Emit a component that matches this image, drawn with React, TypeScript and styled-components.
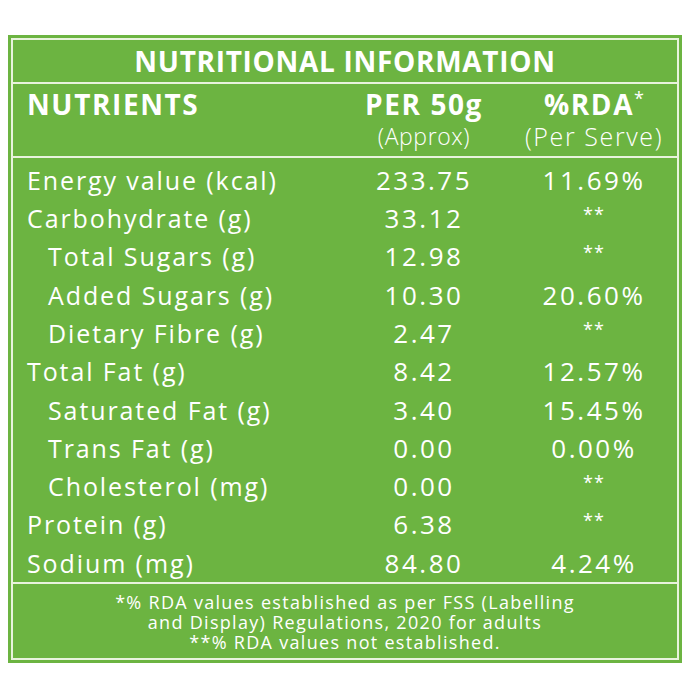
import React from 'react';
import styled, { createGlobalStyle } from 'styled-components';

const GlobalStyle = createGlobalStyle`
  body {
    margin: 0;
    background: #ffffff;
    font-family: "Open Sans", "Noto Sans", sans-serif;
  }
`;

const Page = styled.div`
  width: 690px;
  height: 700px;
  padding: 35px 8px 0 8px;
  box-sizing: border-box;
`;

const OuterBox = styled.div`
  background: #6cb441;
  padding: 3px;
  width: 674px;
  height: 628px;
  box-sizing: border-box;
`;

const InnerBox = styled.div`
  border: 2px solid #e8f3dd;
  height: 100%;
  box-sizing: border-box;
  display: flex;
  flex-direction: column;
  color: #ffffff;
`;

const TitleBand = styled.div`
  height: 43px;
  display: flex;
  align-items: center;
  justify-content: center;
  font-size: 28px;
  font-weight: 700;
  letter-spacing: 0.7px;
  border-bottom: 2px solid #e8f3dd;
`;

const Grid = styled.div`
  display: grid;
  grid-template-columns: 301px 148px 148px;
  column-gap: 22px;
  padding-left: 14px;
`;

const HeaderBand = styled(Grid)`
  height: 74px;
  box-sizing: border-box;
  padding-top: 3px;
  border-bottom: 2px solid #e8f3dd;
`;

const HeadCell = styled.div<{ $center?: boolean }>`
  display: flex;
  flex-direction: column;
  align-items: ${(p) => (p.$center ? 'center' : 'flex-start')};
`;

const HeadMain = styled.span`
  font-size: 28px;
  font-weight: 700;
  line-height: 34px;
  letter-spacing: 1.6px;
  white-space: nowrap;
`;

const HeadSub = styled.span<{ $size: number; $track: number }>`
  font-size: ${(p) => p.$size}px;
  letter-spacing: ${(p) => p.$track}px;
  font-weight: 300;
  line-height: 30px;
  white-space: nowrap;
`;

const Star = styled.span`
  display: inline-block;
  vertical-align: top;
  font-size: 18px;
  line-height: 22px;
  font-weight: 400;
  letter-spacing: 0;
`;

const Body = styled(Grid)`
  flex: 1;
  padding-top: 3px;
  grid-auto-rows: 38.3px;
  align-content: start;
  border-bottom: 2px solid #e8f3dd;
`;

const Cell = styled.div<{ $indent?: boolean; $center?: boolean; $num?: boolean }>`
  display: flex;
  align-items: center;
  justify-content: ${(p) => (p.$center ? 'center' : 'flex-start')};
  padding-left: ${(p) => (p.$indent ? '21px' : '0')};
  font-size: ${(p) => (p.$num ? '26px' : '25px')};
  letter-spacing: ${(p) => (p.$num ? '2.5px' : '1.9px')};
  white-space: nowrap;
`;

const NotSet = styled.span`
  font-size: 18px;
  letter-spacing: 1px;
  margin-bottom: 8px;
`;

const Footer = styled.div`
  height: 75px;
  box-sizing: border-box;
  padding-top: 8px;
  text-align: center;
  font-size: 18px;
  line-height: 20px;
  letter-spacing: 1.3px;
  white-space: nowrap;
`;

type Row = { name: string; per: string; rda: string | null; indent?: boolean };

const rows: Row[] = [
  { name: 'Energy value (kcal)', per: '233.75', rda: '11.69%' },
  { name: 'Carbohydrate (g)', per: '33.12', rda: null },
  { name: 'Total Sugars (g)', per: '12.98', rda: null, indent: true },
  { name: 'Added Sugars (g)', per: '10.30', rda: '20.60%', indent: true },
  { name: 'Dietary Fibre (g)', per: '2.47', rda: null, indent: true },
  { name: 'Total Fat (g)', per: '8.42', rda: '12.57%' },
  { name: 'Saturated Fat (g)', per: '3.40', rda: '15.45%', indent: true },
  { name: 'Trans Fat (g)', per: '0.00', rda: '0.00%', indent: true },
  { name: 'Cholesterol (mg)', per: '0.00', rda: null, indent: true },
  { name: 'Protein (g)', per: '6.38', rda: null },
  { name: 'Sodium (mg)', per: '84.80', rda: '4.24%' },
];

const App: React.FC = () => {
  return (
    <>
      <GlobalStyle />
      <Page>
        <OuterBox>
          <InnerBox>
            <TitleBand>NUTRITIONAL INFORMATION</TitleBand>
            <HeaderBand>
              <HeadCell>
                <HeadMain>NUTRIENTS</HeadMain>
              </HeadCell>
              <HeadCell $center>
                <HeadMain>PER 50g</HeadMain>
                <HeadSub $size={23} $track={0.6}>(Approx)</HeadSub>
              </HeadCell>
              <HeadCell $center>
                <HeadMain>
                  %RDA<Star>*</Star>
                </HeadMain>
                <HeadSub $size={25} $track={1.6}>(Per Serve)</HeadSub>
              </HeadCell>
            </HeaderBand>
            <Body>
              {rows.map((r) => (
                <React.Fragment key={r.name}>
                  <Cell $indent={r.indent}>{r.name}</Cell>
                  <Cell $center $num>{r.per}</Cell>
                  <Cell $center $num>{r.rda ?? <NotSet>**</NotSet>}</Cell>
                </React.Fragment>
              ))}
            </Body>
            <Footer>
              *% RDA values established as per FSS (Labelling
              <br />
              and Display) Regulations, 2020 for adults
              <br />
              **% RDA values not established.
            </Footer>
          </InnerBox>
        </OuterBox>
      </Page>
    </>
  );
};

export default App;
